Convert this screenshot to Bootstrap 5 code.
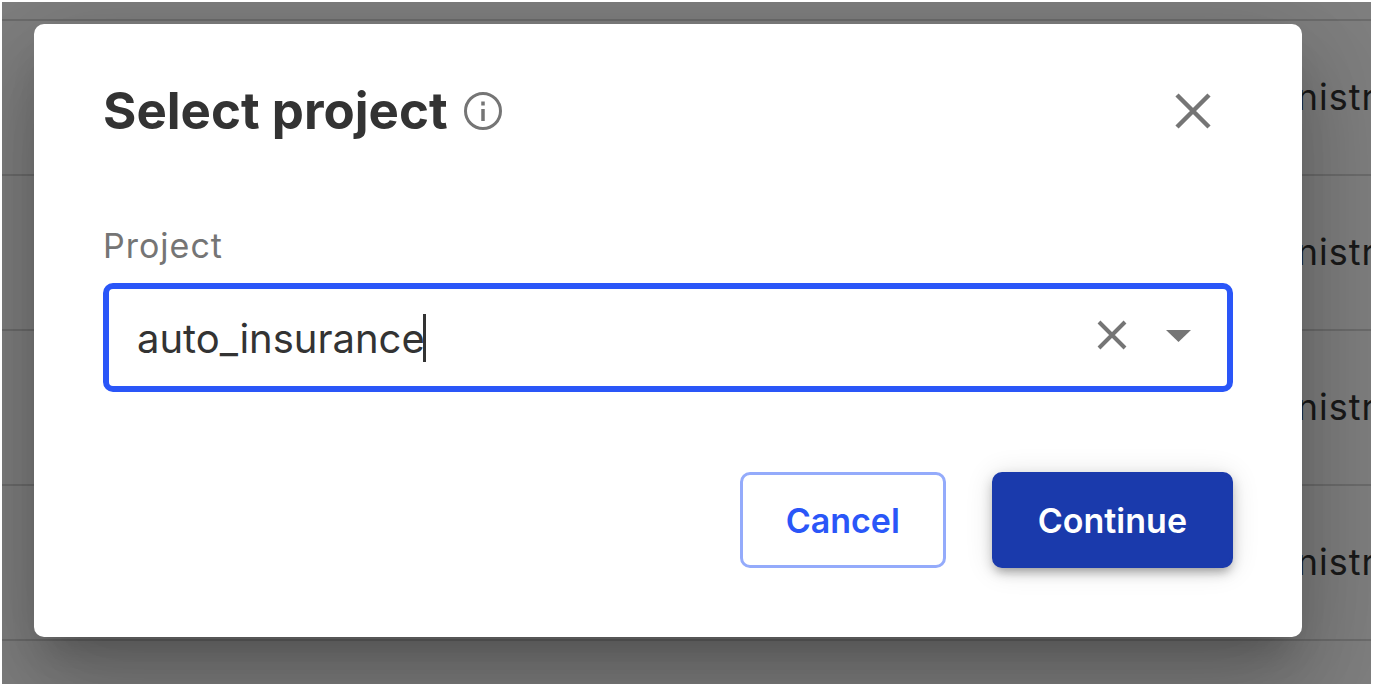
<!DOCTYPE html>
<html lang="en">
<head>
<meta charset="utf-8">
<meta name="viewport" content="width=device-width, initial-scale=1">
<title>Select project</title>
<link href="https://cdn.jsdelivr.net/npm/bootstrap@5.3.0/dist/css/bootstrap.min.css" rel="stylesheet">
<style>
  body { font-family: Inter, "Liberation Sans", sans-serif; color: #333; }
  .stage { display: grid; grid-template: minmax(0, 1fr) / minmax(0, 1fr); min-height: 100vh; padding: 2px 3px 2px 2px; background: #fff; }
  .stage > * { grid-area: 1 / 1; }
  .backdrop-list { background: #7f7f7f; color: #191919; font-size: 36px; line-height: 40px; letter-spacing: 1px; }
  .backdrop-list li { height: 155px; border-top: 2px solid #6c6c6c; padding-bottom: 2px; margin-right: -5px; }
  .backdrop-list li:first-child { margin-top: 17px; }
  .backdrop-list li:last-child { height: 45px; }
  .dialog-layer { padding: 22px 69px 47px 32px; }
  .dialog-box { background: #fff; border-radius: 10px; padding: 56px 69px 69px;
    box-shadow: 0 25px 35px -16px rgba(0,0,0,.2), 0 55px 87px 7px rgba(0,0,0,.14), 0 21px 106px 18px rgba(0,0,0,.12); }
  .dialog-title { font-size: 51px; line-height: 62px; font-weight: 700; }
  .field-label { font-size: 34px; line-height: 44px; letter-spacing: 1px; color: #757575; margin: 82px 0 15px; }
  .combo { height: 109px; border: 6px solid #2a56f8; border-radius: 10px; padding: 0 35px 0 28px; }
  .combo input { width: 286px; height: 60px; border: 0; padding: 2px 0 0; outline: 0; font-size: 40px; color: #333; background: none; }
  .caret-bar { width: 3px; height: 48px; background: #333; }
  .icon-btn { border: 0; padding: 0; background: none; color: #757575; line-height: 0; }
  .combo-icons { gap: 38px; }
  .close-btn { margin-right: 22px; }
  .action-row { margin-top: 80px; gap: 46px; }
  .action-btn { height: 96px; border-radius: 10px; padding: 0 43px; font-size: 34px; font-weight: 600; border-width: 3px; }
  .btn-cancel { color: #2a56f8; border-color: #94abfb; }
  .btn-continue { color: #fff; background: #1a3aac; border-color: #1a3aac;
    box-shadow: 0 7px 9px -5px rgba(0,0,0,.2), 0 5px 12px rgba(0,0,0,.2), 0 2px 28px rgba(0,0,0,.12); }
</style>
</head>
<body>
<main class="stage">
  <ul class="backdrop-list list-unstyled m-0 overflow-hidden" aria-hidden="true">
    <li class="d-flex align-items-center justify-content-end">nistr</li>
    <li class="d-flex align-items-center justify-content-end">nistr</li>
    <li class="d-flex align-items-center justify-content-end">nistr</li>
    <li class="d-flex align-items-center justify-content-end">nistr</li>
    <li></li>
  </ul>
  <div class="dialog-layer d-flex overflow-hidden">
    <form class="dialog-box w-100" role="dialog" aria-labelledby="dlgTitle">
      <header class="d-flex align-items-center">
        <h1 class="dialog-title m-0" id="dlgTitle">Select project</h1>
        <button type="button" class="icon-btn ms-3" aria-label="About projects">
          <svg width="38" height="38" viewBox="1 1 38 38" fill="none" stroke="currentColor" stroke-width="3"><circle cx="20" cy="20" r="17.5"/><path stroke-width="3.500" d="M20 18v12M20 10.500v4"/></svg>
        </button>
        <button type="button" class="icon-btn close-btn ms-auto" aria-label="Close">
          <svg width="36" height="36" viewBox="0 0 36 36" fill="none" stroke="currentColor" stroke-width="4.500"><path d="M2 2l32 32M34 2L2 34"/></svg>
        </button>
      </header>
      <label class="field-label d-block" for="project">Project</label>
      <div class="combo d-flex align-items-center">
        <input id="project" type="text" value="auto_insurance" autocomplete="off">
        <span class="caret-bar"></span>
        <div class="combo-icons d-flex align-items-center ms-auto">
          <button type="button" class="icon-btn" aria-label="Clear">
            <svg width="30" height="36" viewBox="0 0 30 36" fill="none" stroke="currentColor" stroke-width="4"><path d="M2 2l26 26M28 2L2 28"/></svg>
          </button>
          <button type="button" class="icon-btn" aria-label="Open">
            <svg width="27" height="20" viewBox="0 0 27 20" fill="currentColor"><path d="M1 2h25L13.500 14z"/></svg>
          </button>
        </div>
      </div>
      <div class="action-row d-flex justify-content-end">
        <button type="button" class="action-btn btn btn-cancel">Cancel</button>
        <button type="submit" class="action-btn btn btn-continue">Continue</button>
      </div>
    </form>
  </div>
</main>
<script src="https://cdn.jsdelivr.net/npm/bootstrap@5.3.0/dist/js/bootstrap.bundle.min.js"></script>
</body>
</html>
